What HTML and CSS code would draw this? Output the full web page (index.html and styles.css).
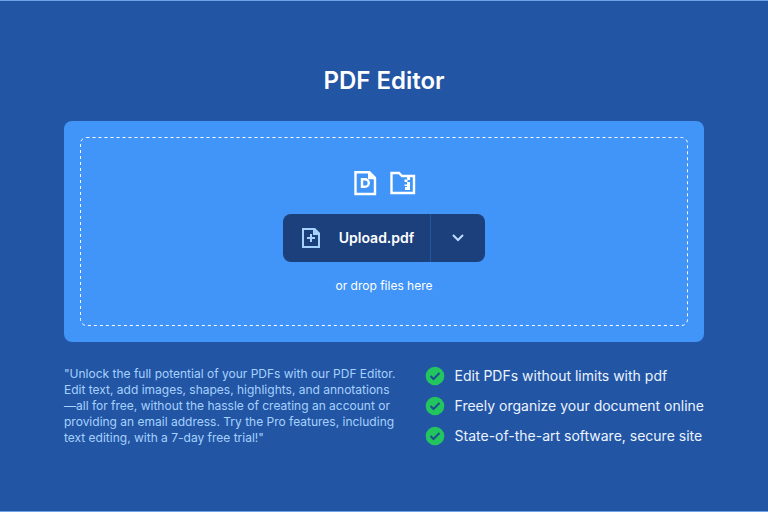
FILE: index.html
```html
<!DOCTYPE html>
<html lang="en">
<head>
<meta charset="utf-8">
<meta name="viewport" content="width=device-width, initial-scale=1">
<title>PDF Editor</title>
<link rel="stylesheet" href="styles.css">
</head>
<body>
<main class="page">
  <h1 class="title">PDF Editor</h1>
  <section class="panel">
    <div class="dropzone">
      <svg class="outline" aria-hidden="true"><rect class="outline-rect" x="0.500" y="0.500" rx="6"/></svg>
      <div class="formats">
        <svg class="icon" viewBox="0 0 26 26" aria-hidden="true"><path d="M3.500 2.200H17l6 6V24H3.500z"/><path class="solid" d="M16 1.200h2l6 6v2h-8z"/><path d="M10 9.200h3a3.800 3.800 0 0 1 0 7.600h-3z"/></svg>
        <svg class="icon" viewBox="0 0 26 26" aria-hidden="true"><path d="M1.500 3H9l3 3h12v17H1.500z"/><path class="solid" fill-rule="evenodd" d="M17 7h3v3h-3zM14.500 9.500h3V12h-3zM17 12h3v2.500h-3zM14.500 14.500H20V20h-5v-3h2v-1h-2.500z"/></svg>
      </div>
      <div class="upload">
        <button class="upload-main" type="button">
          <svg class="icon-add" viewBox="0 0 20 22" aria-hidden="true"><path d="M2 2h11l5 5v13H2zM10 7v8M6 11h8"/><path class="fold" d="M12 1h2l5 5v2h-7z"/></svg>
          Upload.pdf
        </button>
        <button class="upload-more" type="button" aria-label="More upload options">
          <svg class="chevron" viewBox="0 0 12 8" aria-hidden="true"><path d="M1 1l5 5 5-5"/></svg>
        </button>
      </div>
      <p class="hint">or drop files here</p>
    </div>
  </section>
  <section class="info">
    <p class="about">"Unlock the full potential of your PDFs with our PDF Editor. Edit text, add images, shapes, highlights, and annotations—all for free, without the hassle of creating an account or providing an email address. Try the Pro features, including text editing, with a 7-day free trial!"</p>
    <ul class="features">
      <li class="feature"><svg class="check" viewBox="0 0 20 20" aria-hidden="true"><circle cx="10" cy="10" r="9.300"/><path d="M5.500 10l3 3 6-6"/></svg>Edit PDFs without limits with pdf</li>
      <li class="feature"><svg class="check" viewBox="0 0 20 20" aria-hidden="true"><circle cx="10" cy="10" r="9.300"/><path d="M5.500 10l3 3 6-6"/></svg>Freely organize your document online</li>
      <li class="feature"><svg class="check" viewBox="0 0 20 20" aria-hidden="true"><circle cx="10" cy="10" r="9.300"/><path d="M5.500 10l3 3 6-6"/></svg>State-of-the-art software, secure site</li>
    </ul>
  </section>
</main>
</body>
</html>
```
FILE: styles.css
```css
* { box-sizing: border-box; }
body { margin: 0; background: #2355a5; color: #fff; font-family: Inter, sans-serif; }
h1, p, ul { margin: 0; padding: 0; }
.page { min-height: 100vh; padding: 64px; border-top: 1px solid #6ea3e8; border-bottom: 1px solid #6ea3e8; }
.title { font-size: 24px; line-height: 32px; font-weight: 600; text-align: center; }
.panel { margin-top: 24px; padding: 16px; border-radius: 8px; background: #4194f8; }
.dropzone { position: relative; display: flex; flex-direction: column; align-items: center; padding: 33px 16px 32px; }
.outline { position: absolute; inset: 0; width: 100%; height: 100%; }
.outline-rect { width: calc(100% - 1px); height: calc(100% - 1px); fill: none; stroke: #fff; stroke-width: 1; stroke-dasharray: 3 3; }
.formats { display: flex; gap: 12px; }
.icon { width: 26px; height: 26px; fill: none; stroke: #fff; stroke-width: 2.4; }
.solid { fill: #fff; stroke: none; }
.upload { position: relative; display: flex; height: 48px; margin-top: 18px; border-radius: 8px; overflow: hidden; background: #1b407c; }
.upload button { display: flex; align-items: center; border: 0; background: none; color: #fff; font: 600 14px/20px Inter, sans-serif; }
.upload .upload-main { gap: 18px; padding: 0 16px 0 18px; }
.upload .upload-more { padding: 0 21px; border-left: 1px solid #2355a5; }
.icon-add { width: 20px; height: 22px; fill: none; stroke: #a5d2fd; stroke-width: 2; }
.fold { fill: #a5d2fd; stroke: none; }
.chevron { width: 12px; height: 8px; fill: none; stroke: #bfdbfe; stroke-width: 2; }
.hint { margin-top: 16px; font-size: 12px; line-height: 16px; }
.info { display: flex; justify-content: space-between; gap: 24px; margin-top: 24px; }
.about { flex: 1; font-size: 12px; line-height: 16px; color: #a5d2fd; }
.features { flex: none; display: grid; gap: 10px; align-content: start; list-style: none; }
.feature { display: flex; align-items: center; gap: 10px; font-size: 14px; line-height: 20px; color: #eaf4ff; }
.check { width: 20px; height: 20px; }
.check circle { fill: #22c55e; }
.check path { fill: none; stroke: #1d4f8f; stroke-width: 2; }
```
